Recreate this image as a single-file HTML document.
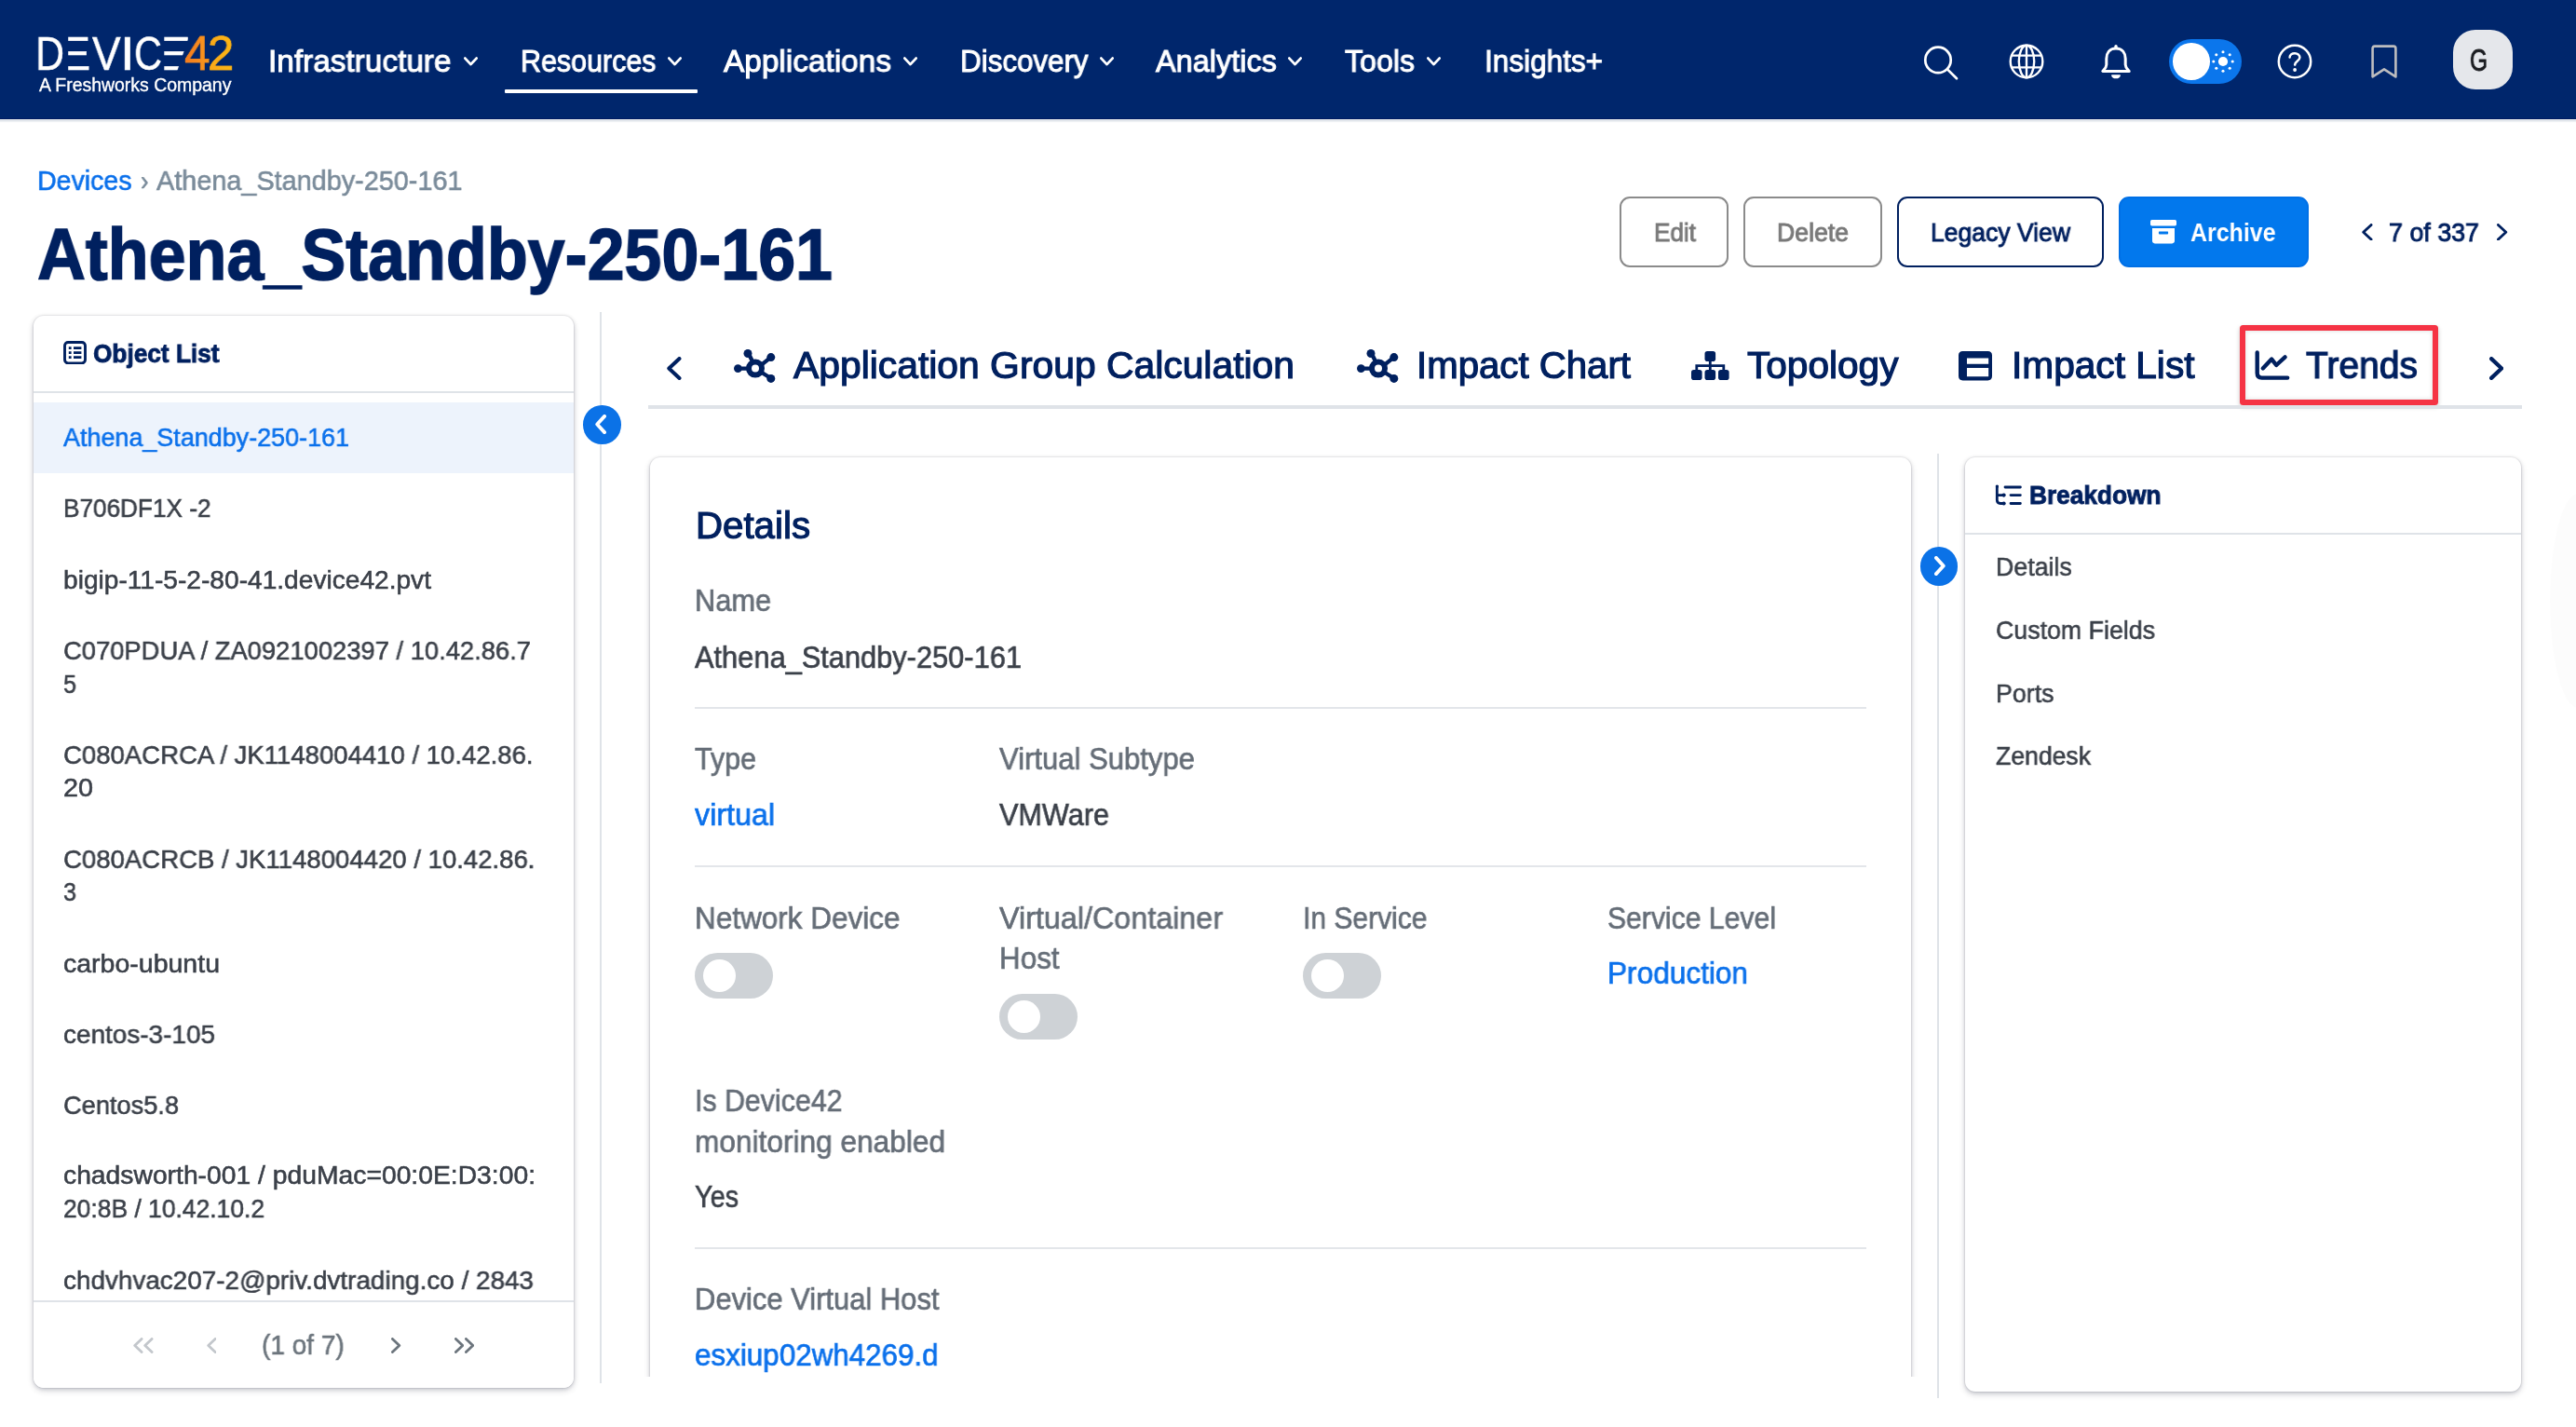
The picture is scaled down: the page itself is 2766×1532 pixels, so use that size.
<!DOCTYPE html>
<html lang="en"><head><meta charset="utf-8"><title>Athena_Standby-250-161 | Device42</title>
<style>
*{box-sizing:border-box;margin:0;padding:0}
ul{list-style:none}
html,body{width:2766px;height:1532px;overflow:hidden;background:#fff}
body{position:relative;font-family:"Liberation Sans",sans-serif;-webkit-font-smoothing:antialiased}
.a,.t{position:absolute;display:block}
.t,.g{white-space:nowrap;line-height:1;transform-origin:0 50%}
.g{position:absolute;display:block}
.t,.g{will-change:transform}
header{position:absolute;left:0;top:0;width:2766px;height:128px;background:#00266c;border-bottom:1px solid #001a62;box-shadow:0 1px 0 #eceff0,0 2px 0 #dfe3ea,0 3px 1px rgba(223,227,234,.5)}
.logo{display:block}
.avatar{background:#e5e7eb;border-radius:24px}
main{position:absolute;left:0;top:0;width:2766px;height:1532px}
.btn{border-radius:11px;border:2px solid #8b8b8b;background:#fff}
.b-navy{border-color:#00205f}
.b-blue{background:#0278ed;border-color:#0070e6}
.card{position:absolute;background:#fff;border-radius:11px;box-shadow:0 0 0 1px rgba(0,10,30,.045),0 1px 4px rgba(0,10,40,.15),0 3px 7px rgba(0,10,40,.16)}
.vline{position:absolute;width:2px;background:#dfe3e8}
.circ{position:absolute;width:40.5px;height:41.5px;border-radius:50%;background:#0b72e7}
.tog{width:84px;height:49px;border-radius:25px;background:#ced2d6}
.tog i{position:absolute;left:8.5px;top:7px;width:35px;height:35px;border-radius:50%;background:#fff}
#clip{position:absolute;left:680px;top:470px;width:1390px;height:1008px;overflow:hidden}
</style></head>
<body>
<main>
<span class="t" id="t17" style="left:40px;top:179.4px;font-family:'Liberation Sans',sans-serif;font-size:30.24px;font-weight:400;color:#0a70eb;transform:scaleX(0.9438);-webkit-text-stroke:0.6px currentColor;">Devices</span><span class="t" id="t18" style="left:151px;top:179.4px;font-family:'Liberation Sans',sans-serif;font-size:30.24px;font-weight:400;color:#7a8b9a;transform:scaleX(0.8434);-webkit-text-stroke:0.6px currentColor;">›</span><span class="t" id="t19" style="left:167.5px;top:179.4px;font-family:'Liberation Sans',sans-serif;font-size:30.24px;font-weight:400;color:#7a8b9a;transform:scaleX(0.9532);-webkit-text-stroke:0.6px currentColor;">Athena_Standby-250-161</span><span class="t" id="t20" style="left:40px;top:233.97px;font-family:'Liberation Sans',sans-serif;font-size:78.0px;font-weight:700;color:#00205f;transform:scaleX(0.9206);-webkit-text-stroke:1.5px currentColor;">Athena_Standby-250-161</span><div class="btn b-grey a" style="left:1739px;top:211px;width:116.5px;height:75.5px"></div><span class="t" id="t21" style="left:1775.5px;top:236.23px;font-family:'Liberation Sans',sans-serif;font-size:28.08px;font-weight:400;color:#797979;transform:scaleX(0.9299);-webkit-text-stroke:0.95px currentColor;">Edit</span><div class="btn b-grey a" style="left:1872px;top:211px;width:148.5px;height:75.5px"></div><span class="t" id="t22" style="left:1908px;top:236.23px;font-family:'Liberation Sans',sans-serif;font-size:28.08px;font-weight:400;color:#797979;transform:scaleX(0.9486);-webkit-text-stroke:0.95px currentColor;">Delete</span><div class="btn b-navy a" style="left:2037px;top:211px;width:221.5px;height:75.5px"></div><span class="t" id="t23" style="left:2073px;top:236.23px;font-family:'Liberation Sans',sans-serif;font-size:28.08px;font-weight:400;color:#00205f;transform:scaleX(0.9452);-webkit-text-stroke:0.95px currentColor;">Legacy View</span><div class="btn b-blue a" style="left:2275px;top:211px;width:203.5px;height:75.5px"></div><span class="t" id="t24" style="left:2352px;top:236.23px;font-family:'Liberation Sans',sans-serif;font-size:28.08px;font-weight:700;color:#fff;transform:scaleX(0.8882);">Archive</span><svg class="a" style="left:2309px;top:236px" width="28" height="26" viewBox="0 0 28 26" fill="#fff"><rect x="0" y="0" width="28" height="6.4" rx="1.6"/><path d="M2 9 H26 V22.6 C26 24.4 25 25.4 23.2 25.4 H4.8 C3 25.4 2 24.4 2 22.6 Z M9.6 12.6 C8.6 12.6 8.6 15.4 9.6 15.4 H18.4 C19.4 15.4 19.4 12.6 18.4 12.6 Z" fill-rule="evenodd"/></svg><svg class="a" style="left:2536px;top:239.5px" width="11.5" height="18.5" viewBox="0 0 11.5 18.5"><path d="M10.1 1.4 L1.7 9.25 L10.1 17.1" fill="none" stroke="#00205f" stroke-width="2.8" stroke-linecap="round" stroke-linejoin="round"/></svg><span class="t" id="t25" style="left:2565px;top:236.23px;font-family:'Liberation Sans',sans-serif;font-size:28.08px;font-weight:400;color:#00205f;transform:scaleX(0.9558);-webkit-text-stroke:0.95px currentColor;">7 of 337</span><svg class="a" style="left:2681px;top:239.5px" width="11.5" height="18.5" viewBox="0 0 11.5 18.5"><path d="M1.4 1.4 L9.799999999999999 9.25 L1.4 17.1" fill="none" stroke="#00205f" stroke-width="2.8" stroke-linecap="round" stroke-linejoin="round"/></svg>
<aside class="card" id="objlist" style="left:36px;top:339px;width:580px;height:1151px;overflow:hidden">
<svg class="a" style="left:31.599999999999994px;top:26.80000000000001px" width="25" height="25.4" viewBox="0 0 25 25.4" fill="none" stroke="#00205f" stroke-width="2.9"><rect x="1.5" y="1.5" width="22" height="22.4" rx="3.6"/><path d="M5.8 7.7H8.6M11 7.7H19.4M5.8 12.7H8.6M11 12.7H19.4M5.8 17.7H8.6M11 17.7H19.4" stroke-width="2.7"/></svg><span class="t" id="t26" style="left:63.5px;top:26.8px;font-family:'Liberation Sans',sans-serif;font-size:28.0px;font-weight:700;color:#00205f;transform:scaleX(0.9364);-webkit-text-stroke:0.9px currentColor;">Object List</span><div class="a" style="left:0;top:81.19999999999999px;width:580px;height:2px;background:#dfe3e8"></div><div class="a" style="left:0;top:93px;width:580px;height:75.5px;background:#edf3fc"></div><ul><li><span class="t" id="t27" style="left:32px;top:117.23px;font-family:'Liberation Sans',sans-serif;font-size:28.08px;font-weight:400;color:#0a70eb;transform:scaleX(0.9592);-webkit-text-stroke:0.56px currentColor;">Athena_Standby-250-161</span></li><li><span class="t" id="t28" style="left:32px;top:193.23px;font-family:'Liberation Sans',sans-serif;font-size:28.08px;font-weight:400;color:#3b4049;transform:scaleX(0.9317);-webkit-text-stroke:0.56px currentColor;">B706DF1X -2</span></li><li><span class="t" id="t29" style="left:32px;top:269.73px;font-family:'Liberation Sans',sans-serif;font-size:28.08px;font-weight:400;color:#3b4049;transform:scaleX(1.0016);-webkit-text-stroke:0.56px currentColor;">bigip-11-5-2-80-41.device42.pvt</span></li><li><span class="t" id="t30" style="left:32px;top:345.73px;font-family:'Liberation Sans',sans-serif;font-size:28.08px;font-weight:400;color:#3b4049;transform:scaleX(0.9745);-webkit-text-stroke:0.56px currentColor;">C070PDUA / ZA0921002397 / 10.42.86.7</span><span class="t" id="t31" style="left:32px;top:381.73px;font-family:'Liberation Sans',sans-serif;font-size:28.08px;font-weight:400;color:#3b4049;transform:scaleX(0.896);-webkit-text-stroke:0.56px currentColor;">5</span></li><li><span class="t" id="t32" style="left:32px;top:457.73px;font-family:'Liberation Sans',sans-serif;font-size:28.08px;font-weight:400;color:#3b4049;transform:scaleX(0.9804);-webkit-text-stroke:0.56px currentColor;">C080ACRCA / JK1148004410 / 10.42.86.</span><span class="t" id="t33" style="left:32px;top:493.23px;font-family:'Liberation Sans',sans-serif;font-size:28.08px;font-weight:400;color:#3b4049;transform:scaleX(1.0245);-webkit-text-stroke:0.56px currentColor;">20</span></li><li><span class="t" id="t34" style="left:32px;top:569.73px;font-family:'Liberation Sans',sans-serif;font-size:28.08px;font-weight:400;color:#3b4049;transform:scaleX(0.9813);-webkit-text-stroke:0.56px currentColor;">C080ACRCB / JK1148004420 / 10.42.86.</span><span class="t" id="t35" style="left:32px;top:605.23px;font-family:'Liberation Sans',sans-serif;font-size:28.08px;font-weight:400;color:#3b4049;transform:scaleX(0.896);-webkit-text-stroke:0.56px currentColor;">3</span></li><li><span class="t" id="t36" style="left:32px;top:681.73px;font-family:'Liberation Sans',sans-serif;font-size:28.08px;font-weight:400;color:#3b4049;transform:scaleX(1.0153);-webkit-text-stroke:0.56px currentColor;">carbo-ubuntu</span></li><li><span class="t" id="t37" style="left:32px;top:757.73px;font-family:'Liberation Sans',sans-serif;font-size:28.08px;font-weight:400;color:#3b4049;transform:scaleX(0.9946);-webkit-text-stroke:0.56px currentColor;">centos-3-105</span></li><li><span class="t" id="t38" style="left:32px;top:834.23px;font-family:'Liberation Sans',sans-serif;font-size:28.08px;font-weight:400;color:#3b4049;transform:scaleX(0.9688);-webkit-text-stroke:0.56px currentColor;">Centos5.8</span></li><li><span class="t" id="t39" style="left:32px;top:909.23px;font-family:'Liberation Sans',sans-serif;font-size:28.08px;font-weight:400;color:#3b4049;transform:scaleX(1.0072);-webkit-text-stroke:0.56px currentColor;">chadsworth-001 / pduMac=00:0E:D3:00:</span><span class="t" id="t40" style="left:32px;top:945.23px;font-family:'Liberation Sans',sans-serif;font-size:28.08px;font-weight:400;color:#3b4049;transform:scaleX(0.9412);-webkit-text-stroke:0.56px currentColor;">20:8B / 10.42.10.2</span></li><li><span class="t" id="t41" style="left:32px;top:1021.73px;font-family:'Liberation Sans',sans-serif;font-size:28.08px;font-weight:400;color:#3b4049;transform:scaleX(0.9927);-webkit-text-stroke:0.56px currentColor;">chdvhvac207-2@priv.dvtrading.co / 2843</span></li></ul><div class="a" style="left:0;top:1057px;width:580px;height:2px;background:#dfe3e8"></div><div class="a" style="left:0;top:1059px;width:580px;height:92px;background:#fff;border-radius:0 0 10px 10px"></div><svg class="a" style="left:107px;top:1097px" width="10.5" height="17" viewBox="0 0 10.5 17"><path d="M9.1 1.4 L1.7 8.5 L9.1 15.6" fill="none" stroke="#c3c7cc" stroke-width="2.8" stroke-linecap="round" stroke-linejoin="round"/></svg><svg class="a" style="left:118px;top:1097px" width="10.5" height="17" viewBox="0 0 10.5 17"><path d="M9.1 1.4 L1.7 8.5 L9.1 15.6" fill="none" stroke="#c3c7cc" stroke-width="2.8" stroke-linecap="round" stroke-linejoin="round"/></svg><svg class="a" style="left:185.5px;top:1097px" width="10.5" height="17" viewBox="0 0 10.5 17"><path d="M9.1 1.4 L1.7 8.5 L9.1 15.6" fill="none" stroke="#c3c7cc" stroke-width="2.8" stroke-linecap="round" stroke-linejoin="round"/></svg><span class="t" id="t42" style="left:245px;top:1089.77px;font-family:'Liberation Sans',sans-serif;font-size:29.81px;font-weight:400;color:#6c757d;transform:scaleX(0.9396);-webkit-text-stroke:0.6px currentColor;">(1 of 7)</span><svg class="a" style="left:384px;top:1097px" width="10.5" height="17" viewBox="0 0 10.5 17"><path d="M1.4 1.4 L8.799999999999999 8.5 L1.4 15.6" fill="none" stroke="#6c757d" stroke-width="2.8" stroke-linecap="round" stroke-linejoin="round"/></svg><svg class="a" style="left:451.5px;top:1097px" width="10.5" height="17" viewBox="0 0 10.5 17"><path d="M1.4 1.4 L8.799999999999999 8.5 L1.4 15.6" fill="none" stroke="#6c757d" stroke-width="2.8" stroke-linecap="round" stroke-linejoin="round"/></svg><svg class="a" style="left:462.5px;top:1097px" width="10.5" height="17" viewBox="0 0 10.5 17"><path d="M1.4 1.4 L8.799999999999999 8.5 L1.4 15.6" fill="none" stroke="#6c757d" stroke-width="2.8" stroke-linecap="round" stroke-linejoin="round"/></svg>
</aside>
<div class="vline" style="left:644px;top:335px;height:1150px"></div>
<div class="circ" style="left:626px;top:435px"><svg class="a" style="left:12.6px;top:10px" width="12" height="21" viewBox="0 0 12 21"><path d="M10.1 1.9 L2.1999999999999997 10.5 L10.1 19.1" fill="none" stroke="#fff" stroke-width="3.8" stroke-linecap="round" stroke-linejoin="round"/></svg></div>
<nav id="tabs"><svg class="a" style="left:716px;top:382.5px" width="15.5" height="25" viewBox="0 0 15.5 25"><path d="M13.5 2.0 L2.3 12.5 L13.5 23.0" fill="none" stroke="#00205f" stroke-width="4" stroke-linecap="round" stroke-linejoin="round"/></svg><svg class="a" style="left:788px;top:374.5px" width="45" height="37" viewBox="0 0 45 37"><g stroke="#00205f" stroke-width="4.4" stroke-linecap="round" fill="none"><path d="M3.8 20.6H14M15.2 3.6L20 13M39.6 8.6L30 16.4M39.6 31L30 25"/><circle cx="23" cy="20.6" r="7" stroke-width="6"/></g><g fill="#00205f"><circle cx="4.4" cy="20.6" r="4.4"/><circle cx="15" cy="4.5" r="4.5"/><circle cx="39.8" cy="8.6" r="4.5"/><circle cx="39.8" cy="31.4" r="4.5"/></g></svg><span class="t" id="t43" style="left:852px;top:372.14px;font-family:'Liberation Sans',sans-serif;font-size:40.0px;font-weight:400;color:#00205f;transform:scaleX(1.0209);-webkit-text-stroke:1.2px currentColor;">Application Group Calculation</span><svg class="a" style="left:1456.5px;top:374.5px" width="45" height="37" viewBox="0 0 45 37"><g stroke="#00205f" stroke-width="4.4" stroke-linecap="round" fill="none"><path d="M3.8 20.6H14M15.2 3.6L20 13M39.6 8.6L30 16.4M39.6 31L30 25"/><circle cx="23" cy="20.6" r="7" stroke-width="6"/></g><g fill="#00205f"><circle cx="4.4" cy="20.6" r="4.4"/><circle cx="15" cy="4.5" r="4.5"/><circle cx="39.8" cy="8.6" r="4.5"/><circle cx="39.8" cy="31.4" r="4.5"/></g></svg><span class="t" id="t44" style="left:1521px;top:372.14px;font-family:'Liberation Sans',sans-serif;font-size:40.0px;font-weight:400;color:#00205f;transform:scaleX(1.0045);-webkit-text-stroke:1.2px currentColor;">Impact Chart</span><svg class="a" style="left:1815.6px;top:376.6px" width="41" height="32" viewBox="0 0 41 32" fill="#00205f"><rect x="14.5" y="0" width="11.6" height="11" rx="2.8"/><rect x="0" y="20" width="11.6" height="11" rx="2.8"/><rect x="14.5" y="20" width="11.6" height="11" rx="2.8"/><rect x="29" y="20" width="11.6" height="11" rx="2.8"/><path d="M18.9 9H21.7V14.2H36.2V22H33.4V17H21.7V22H18.9V17H7.2V22H4.4V14.2H18.9Z"/></svg><span class="t" id="t45" style="left:1875.5px;top:372.14px;font-family:'Liberation Sans',sans-serif;font-size:40.0px;font-weight:400;color:#00205f;transform:scaleX(1.0148);-webkit-text-stroke:1.2px currentColor;">Topology</span><svg class="a" style="left:2103px;top:376.7px" width="36" height="32" viewBox="0 0 36 32"><path fill="#00205f" fill-rule="evenodd" d="M4.6 0H31.4C34.4 0 36 1.6 36 4.6V26.8C36 29.8 34.4 31.4 31.4 31.4H4.6C1.6 31.4 0 29.8 0 26.8V4.6C0 1.6 1.6 0 4.6 0ZM9 7.5V13.7H32.2V7.5ZM9 18V27.3H32.2V18Z"/></svg><span class="t" id="t46" style="left:2160px;top:372.14px;font-family:'Liberation Sans',sans-serif;font-size:40.0px;font-weight:400;color:#00205f;transform:scaleX(1.016);-webkit-text-stroke:1.2px currentColor;">Impact List</span><div class="a" style="left:2405px;top:349px;width:213px;height:86.3px;border:6px solid #f53344;border-radius:3.5px;box-shadow:0 2px 5px rgba(0,0,0,.22),inset 0 0 5px rgba(0,0,0,.14);box-sizing:border-box"></div><svg class="a" style="left:2420px;top:375px" width="40" height="34" viewBox="0 0 40 34" fill="none" stroke="#00205f" stroke-width="4.4" stroke-linecap="round" stroke-linejoin="round"><path d="M3.7 3.4V25.6Q3.7 30.6 8.7 30.6H36.2"/><path d="M9.8 20.4L19.2 10.6L24.2 17L33.6 8.4"/></svg><span class="t" id="t47" style="left:2476px;top:372.14px;font-family:'Liberation Sans',sans-serif;font-size:40.0px;font-weight:400;color:#00205f;transform:scaleX(0.9755);-webkit-text-stroke:1.2px currentColor;">Trends</span><svg class="a" style="left:2672.5px;top:382.5px" width="15.5" height="25" viewBox="0 0 15.5 25"><path d="M2.1 2.1 L13.1 12.5 L2.1 22.9" fill="none" stroke="#00205f" stroke-width="4.2" stroke-linecap="round" stroke-linejoin="round"/></svg><div class="a" style="left:696px;top:435px;width:2012px;height:4px;background:#dfe3e8"></div></nav>
<div id="clip"><section class="card" id="details" style="left:18px;top:21px;width:1354px;height:1100px">
<span class="t" id="t48" style="left:49px;top:52.64px;font-family:'Liberation Sans',sans-serif;font-size:40.0px;font-weight:400;color:#00205f;transform:scaleX(1.006);-webkit-text-stroke:1.2px currentColor;">Details</span><span class="t" id="t49" style="left:48px;top:138.37px;font-family:'Liberation Sans',sans-serif;font-size:32.4px;font-weight:400;color:#656d77;transform:scaleX(0.949);-webkit-text-stroke:0.65px currentColor;">Name</span><span class="t" id="t50" style="left:48px;top:199.07px;font-family:'Liberation Sans',sans-serif;font-size:32.4px;font-weight:400;color:#3b4049;transform:scaleX(0.9507);-webkit-text-stroke:0.65px currentColor;">Athena_Standby-250-161</span><div class="a" style="left:48px;top:267.79999999999995px;width:1258px;height:2px;background:#e3e6ea"></div><span class="t" id="t51" style="left:48px;top:307.57px;font-family:'Liberation Sans',sans-serif;font-size:32.4px;font-weight:400;color:#656d77;transform:scaleX(0.9397);-webkit-text-stroke:0.65px currentColor;">Type</span><span class="t" id="t52" style="left:375px;top:307.57px;font-family:'Liberation Sans',sans-serif;font-size:32.4px;font-weight:400;color:#656d77;transform:scaleX(0.9585);-webkit-text-stroke:0.65px currentColor;">Virtual Subtype</span><span class="t" id="t53" style="left:48px;top:367.57px;font-family:'Liberation Sans',sans-serif;font-size:32.4px;font-weight:400;color:#0a70eb;transform:scaleX(0.9953);-webkit-text-stroke:0.65px currentColor;">virtual</span><span class="t" id="t54" style="left:375px;top:367.57px;font-family:'Liberation Sans',sans-serif;font-size:32.4px;font-weight:400;color:#3b4049;transform:scaleX(0.9457);-webkit-text-stroke:0.65px currentColor;">VMWare</span><div class="a" style="left:48px;top:437.70000000000005px;width:1258px;height:2px;background:#e3e6ea"></div><span class="t" id="t55" style="left:48px;top:478.57px;font-family:'Liberation Sans',sans-serif;font-size:32.4px;font-weight:400;color:#656d77;transform:scaleX(0.9722);-webkit-text-stroke:0.65px currentColor;">Network Device</span><span class="t" id="t56" style="left:375px;top:478.57px;font-family:'Liberation Sans',sans-serif;font-size:32.4px;font-weight:400;color:#656d77;transform:scaleX(0.9972);-webkit-text-stroke:0.65px currentColor;">Virtual/Container</span><span class="t" id="t57" style="left:375px;top:522.07px;font-family:'Liberation Sans',sans-serif;font-size:32.4px;font-weight:400;color:#656d77;transform:scaleX(0.9698);-webkit-text-stroke:0.65px currentColor;">Host</span><span class="t" id="t58" style="left:701px;top:478.57px;font-family:'Liberation Sans',sans-serif;font-size:32.4px;font-weight:400;color:#656d77;transform:scaleX(0.9269);-webkit-text-stroke:0.65px currentColor;">In Service</span><span class="t" id="t59" style="left:1028px;top:478.57px;font-family:'Liberation Sans',sans-serif;font-size:32.4px;font-weight:400;color:#656d77;transform:scaleX(0.9308);-webkit-text-stroke:0.65px currentColor;">Service Level</span><div class="a tog" style="left:48px;top:532px"><i></i></div><div class="a tog" style="left:375px;top:576px"><i></i></div><div class="a tog" style="left:701px;top:532px"><i></i></div><span class="t" id="t60" style="left:1028px;top:537.57px;font-family:'Liberation Sans',sans-serif;font-size:32.4px;font-weight:400;color:#0a70eb;transform:scaleX(0.9751);-webkit-text-stroke:0.65px currentColor;">Production</span><span class="t" id="t61" style="left:48px;top:674.57px;font-family:'Liberation Sans',sans-serif;font-size:32.4px;font-weight:400;color:#656d77;transform:scaleX(0.9366);-webkit-text-stroke:0.65px currentColor;">Is Device42</span><span class="t" id="t62" style="left:48px;top:718.57px;font-family:'Liberation Sans',sans-serif;font-size:32.4px;font-weight:400;color:#656d77;transform:scaleX(0.9764);-webkit-text-stroke:0.65px currentColor;">monitoring enabled</span><span class="t" id="t63" style="left:48px;top:777.57px;font-family:'Liberation Sans',sans-serif;font-size:32.4px;font-weight:400;color:#3b4049;transform:scaleX(0.8894);-webkit-text-stroke:0.65px currentColor;">Yes</span><div class="a" style="left:48px;top:848px;width:1258px;height:2px;background:#e3e6ea"></div><span class="t" id="t64" style="left:48px;top:887.57px;font-family:'Liberation Sans',sans-serif;font-size:32.4px;font-weight:400;color:#656d77;transform:scaleX(0.9551);-webkit-text-stroke:0.65px currentColor;">Device Virtual Host</span><span class="t" id="t65" style="left:48px;top:947.87px;font-family:'Liberation Sans',sans-serif;font-size:32.4px;font-weight:400;color:#0a70eb;transform:scaleX(0.9688);-webkit-text-stroke:0.65px currentColor;">esxiup02wh4269.d</span>
</section></div>
<div class="vline" style="left:2080px;top:487px;height:1014px"></div>
<div class="circ" style="left:2061.5px;top:587px"><svg class="a" style="left:15.6px;top:10px" width="12" height="21" viewBox="0 0 12 21"><path d="M1.9 1.9 L9.799999999999999 10.5 L1.9 19.1" fill="none" stroke="#fff" stroke-width="3.8" stroke-linecap="round" stroke-linejoin="round"/></svg></div>
<aside class="card" id="breakdown" style="left:2110px;top:491px;width:596.5px;height:1003px">
<svg class="a" style="left:32px;top:28.5px" width="29" height="24" viewBox="0 0 29 24" fill="none" stroke="#00205f" stroke-width="2.8" stroke-linecap="round"><path d="M2.3 2.2V16.8C2.3 19.4 3.4 20.5 6 20.5H8.4M2.3 11.6H8.4"/><path d="M11 3H27.4M17 11.6H27.4M17 20.5H27.4"/><rect x="0.9" y="0.8" width="3" height="3" rx="0.8" fill="#00205f" stroke="none"/><circle cx="9.6" cy="11.6" r="2.1" fill="#00205f" stroke="none"/><circle cx="9.6" cy="20.5" r="2.1" fill="#00205f" stroke="none"/></svg><span class="t" id="t66" style="left:69px;top:26.8px;font-family:'Liberation Sans',sans-serif;font-size:28.0px;font-weight:700;color:#00205f;transform:scaleX(0.9375);-webkit-text-stroke:0.9px currentColor;">Breakdown</span><div class="a" style="left:0;top:81px;width:596.5px;height:2px;background:#dfe3e8"></div><ul><li><span class="t" id="t67" style="left:33px;top:104.23px;font-family:'Liberation Sans',sans-serif;font-size:28.08px;font-weight:400;color:#3b4049;transform:scaleX(0.9531);-webkit-text-stroke:0.56px currentColor;">Details</span></li><li><span class="t" id="t68" style="left:33px;top:172.23px;font-family:'Liberation Sans',sans-serif;font-size:28.08px;font-weight:400;color:#3b4049;transform:scaleX(0.953);-webkit-text-stroke:0.56px currentColor;">Custom Fields</span></li><li><span class="t" id="t69" style="left:33px;top:239.73px;font-family:'Liberation Sans',sans-serif;font-size:28.08px;font-weight:400;color:#3b4049;transform:scaleX(0.9535);-webkit-text-stroke:0.56px currentColor;">Ports</span></li><li><span class="t" id="t70" style="left:33px;top:307.23px;font-family:'Liberation Sans',sans-serif;font-size:28.08px;font-weight:400;color:#3b4049;transform:scaleX(0.947);-webkit-text-stroke:0.56px currentColor;">Zendesk</span></li></ul>
</aside>
<div class="a" style="left:2738px;top:530px;width:60px;height:230px;border-radius:50%;background:rgba(0,0,0,.012)"></div>
</main>
<header>
<a class="logo" aria-label="DEVICE42 - A Freshworks Company"><span class="g" style="left:37.8px;top:33.0px;font-family:'Liberation Sans',sans-serif;font-size:50.3px;font-weight:400;color:#fff;transform:scaleX(0.853);-webkit-text-stroke:0.55px #fff;">D</span><span class="g" style="left:62.6px;top:33.0px;font-family:'Liberation Sans',sans-serif;font-size:50.3px;font-weight:400;color:#fff;transform:scaleX(1.022);clip-path:inset(0 0 0 10.6px);-webkit-text-stroke:0.55px #fff;">E</span><span class="g" style="left:99.4px;top:33.0px;font-family:'Liberation Sans',sans-serif;font-size:50.3px;font-weight:400;color:#fff;transform:scaleX(0.912);-webkit-text-stroke:0.55px #fff;">V</span><span class="g" style="left:129.3px;top:33.0px;font-family:'Liberation Sans',sans-serif;font-size:50.3px;font-weight:400;color:#fff;transform:scaleX(1.12);-webkit-text-stroke:0.55px #fff;">I</span><span class="g" style="left:144.4px;top:33.0px;font-family:'Liberation Sans',sans-serif;font-size:50.3px;font-weight:400;color:#fff;transform:scaleX(0.826);-webkit-text-stroke:0.55px #fff;">C</span><span class="g" style="left:163.3px;top:33.0px;font-family:'Liberation Sans',sans-serif;font-size:50.3px;font-weight:400;color:#fff;transform:scaleX(1.261);clip-path:polygon(10.6px 0,33.5px 0,19.7px 50.3px,10.6px 50.3px);-webkit-text-stroke:0.55px #fff;">E</span><span class="g" style="left:198.1px;top:31.2px;font-family:'Liberation Sans',sans-serif;font-size:52.5px;font-weight:400;color:#fff;transform:scaleX(0.948);background-image:linear-gradient(90deg,#f47920,#f99b1c);-webkit-text-stroke:0.6px #f78a1e;background-clip:text;-webkit-background-clip:text;color:transparent;">4</span><span class="g" style="left:222.8px;top:31.2px;font-family:'Liberation Sans',sans-serif;font-size:52.5px;font-weight:400;color:#fff;transform:scaleX(0.97);background-image:linear-gradient(90deg,#faa61a,#fdb913);-webkit-text-stroke:0.6px #fbaf17;background-clip:text;-webkit-background-clip:text;color:transparent;">2</span><span class="t" id="t8" style="left:41.6px;top:82.34px;font-family:'Liberation Sans',sans-serif;font-size:19.44px;font-weight:400;color:#fff;-webkit-text-stroke:0.35px currentColor;letter-spacing:0.004px;">A Freshworks Company</span></a><nav><ul><li><span class="t" id="t9" style="left:287.5px;top:49.14px;font-family:'Liberation Sans',sans-serif;font-size:33.5px;font-weight:400;color:#fff;transform:scaleX(0.9956);-webkit-text-stroke:1.0px currentColor;">Infrastructure</span><svg class="a" style="left:497.5px;top:61px" width="15" height="10.5" viewBox="0 0 15 10.5"><path d="M1.4 1.6 L7.5 8.1 L13.6 1.6" fill="none" stroke="#fff" stroke-width="2.8" stroke-linecap="round" stroke-linejoin="round"/></svg></li><li><span class="t" id="t10" style="left:558.5px;top:49.14px;font-family:'Liberation Sans',sans-serif;font-size:33.5px;font-weight:400;color:#fff;transform:scaleX(0.9087);-webkit-text-stroke:1.0px currentColor;">Resources</span><svg class="a" style="left:717px;top:61px" width="15" height="10.5" viewBox="0 0 15 10.5"><path d="M1.4 1.6 L7.5 8.1 L13.6 1.6" fill="none" stroke="#fff" stroke-width="2.8" stroke-linecap="round" stroke-linejoin="round"/></svg></li><li><span class="t" id="t11" style="left:776.5px;top:49.14px;font-family:'Liberation Sans',sans-serif;font-size:33.5px;font-weight:400;color:#fff;transform:scaleX(0.9965);-webkit-text-stroke:1.0px currentColor;">Applications</span><svg class="a" style="left:970px;top:61px" width="15" height="10.5" viewBox="0 0 15 10.5"><path d="M1.4 1.6 L7.5 8.1 L13.6 1.6" fill="none" stroke="#fff" stroke-width="2.8" stroke-linecap="round" stroke-linejoin="round"/></svg></li><li><span class="t" id="t12" style="left:1031px;top:49.14px;font-family:'Liberation Sans',sans-serif;font-size:33.5px;font-weight:400;color:#fff;transform:scaleX(0.935);-webkit-text-stroke:1.0px currentColor;">Discovery</span><svg class="a" style="left:1181px;top:61px" width="15" height="10.5" viewBox="0 0 15 10.5"><path d="M1.4 1.6 L7.5 8.1 L13.6 1.6" fill="none" stroke="#fff" stroke-width="2.8" stroke-linecap="round" stroke-linejoin="round"/></svg></li><li><span class="t" id="t13" style="left:1240.5px;top:49.14px;font-family:'Liberation Sans',sans-serif;font-size:33.5px;font-weight:400;color:#fff;transform:scaleX(0.9697);-webkit-text-stroke:1.0px currentColor;">Analytics</span><svg class="a" style="left:1383px;top:61px" width="15" height="10.5" viewBox="0 0 15 10.5"><path d="M1.4 1.6 L7.5 8.1 L13.6 1.6" fill="none" stroke="#fff" stroke-width="2.8" stroke-linecap="round" stroke-linejoin="round"/></svg></li><li><span class="t" id="t14" style="left:1444px;top:49.14px;font-family:'Liberation Sans',sans-serif;font-size:33.5px;font-weight:400;color:#fff;transform:scaleX(0.9588);-webkit-text-stroke:1.0px currentColor;">Tools</span><svg class="a" style="left:1532px;top:61px" width="15" height="10.5" viewBox="0 0 15 10.5"><path d="M1.4 1.6 L7.5 8.1 L13.6 1.6" fill="none" stroke="#fff" stroke-width="2.8" stroke-linecap="round" stroke-linejoin="round"/></svg></li><li><span class="t" id="t15" style="left:1593.5px;top:49.14px;font-family:'Liberation Sans',sans-serif;font-size:33.5px;font-weight:400;color:#fff;transform:scaleX(0.9406);-webkit-text-stroke:1.0px currentColor;">Insights+</span></li></ul></nav><div class="a" style="left:542px;top:95.6px;width:206.5px;height:4.4px;background:#fff;border-radius:1px"></div><svg class="a" style="left:2062px;top:45px" width="44" height="44" viewBox="0 0 44 44" fill="none" stroke="#fff" stroke-width="2.7" stroke-linecap="round"><circle cx="19" cy="19.4" r="13.7"/><path d="M29 29.4 L39 39.2"/></svg><svg class="a" style="left:2156px;top:45.5px" width="40" height="40" viewBox="0 0 40 40" fill="none" stroke="#fff" stroke-width="2.4"><circle cx="20" cy="20" r="17.3"/><ellipse cx="20" cy="20" rx="8.2" ry="17.3"/><path d="M20 2.7V37.3M3.9 13.6H36.1M3.9 26.4H36.1"/></svg><svg class="a" style="left:2254px;top:47px" width="36" height="40" viewBox="0 0 36 40" fill="none" stroke="#fff" stroke-width="3" stroke-linejoin="round" stroke-linecap="round"><path d="M18 5 C10.8 5 7.8 10.4 7.8 16 V22.4 C7.8 25.4 5.6 27.2 3.8 29.4 H32.2 C30.4 27.2 28.2 25.4 28.2 22.4 V16 C28.2 10.4 25.2 5 18 5 Z"/><path d="M18 2.8 V4.6" stroke-width="3.4"/><path d="M13.8 34 C14.6 37.4 21.4 37.4 22.2 34 Z" fill="#fff" stroke-width="1.4"/></svg><div class="a" style="left:2329px;top:42px;width:78px;height:47.5px;border-radius:24px;background:#0b76ec"></div><div class="a" style="left:2333px;top:46px;width:39.5px;height:39.5px;border-radius:50%;background:#fff"></div><svg class="a" style="left:2373px;top:52px" width="28" height="28" viewBox="0 0 28 28" fill="#fff"><circle cx="14" cy="14" r="5.1"/><circle cx="24.20" cy="14.00" r="1.55"/><circle cx="21.21" cy="21.21" r="1.55"/><circle cx="14.00" cy="24.20" r="1.55"/><circle cx="6.79" cy="21.21" r="1.55"/><circle cx="3.80" cy="14.00" r="1.55"/><circle cx="6.79" cy="6.79" r="1.55"/><circle cx="14.00" cy="3.80" r="1.55"/><circle cx="21.21" cy="6.79" r="1.55"/></svg><svg class="a" style="left:2444px;top:45.5px" width="40" height="40" viewBox="0 0 40 40" fill="none" stroke="#fff" stroke-width="2.5" stroke-linecap="round"><circle cx="20" cy="20" r="17.2"/><path d="M14.6 15.6 C14.6 9.6 25.6 9.8 25.4 15.8 C25.3 19.4 20.2 19.6 20.1 23.6"/><circle cx="20.1" cy="29" r="1.2" fill="#fff" stroke-width="1.4"/></svg><svg class="a" style="left:2544px;top:46px" width="32" height="40" viewBox="0 0 32 40" fill="none" stroke="#bdbdbf" stroke-width="2.6" stroke-linejoin="round"><path d="M3.6 6 C3.6 4.4 4.4 3.6 6 3.6 H26 C27.6 3.6 28.4 4.4 28.4 6 V36.4 L16 28.4 L3.6 36.4 Z"/></svg><div class="avatar a" style="left:2634px;top:32px;width:64px;height:64px"></div><span class="t" id="t16" style="left:2651.5px;top:47.67px;font-family:'Liberation Sans',sans-serif;font-size:33.0px;font-weight:400;color:#1b1d21;transform:scaleX(0.7401);-webkit-text-stroke:0.9px currentColor;">G</span>
</header>
</body></html>
